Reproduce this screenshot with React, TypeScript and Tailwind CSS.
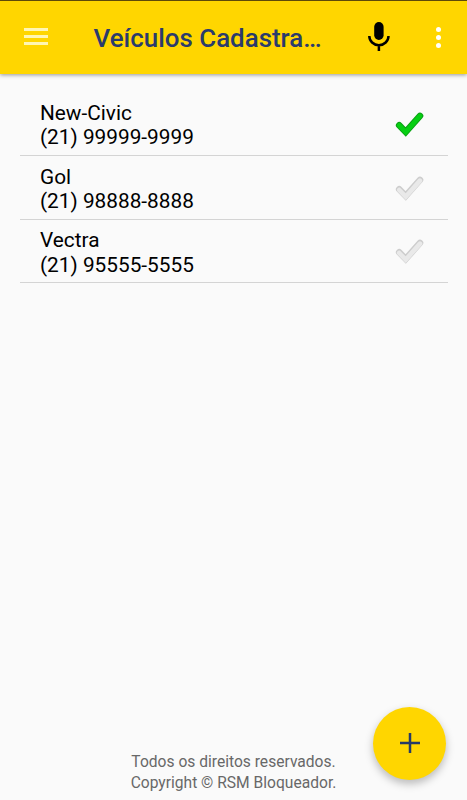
interface Vehicle {
  name: string;
  phone: string;
  selected: boolean;
}

const vehicles: Vehicle[] = [
  { name: 'New-Civic', phone: '(21) 99999-9999', selected: true },
  { name: 'Gol', phone: '(21) 98888-8888', selected: false },
  { name: 'Vectra', phone: '(21) 95555-5555', selected: false },
];

function CheckMark({ selected }: { selected: boolean }) {
  const edge = selected ? '#0a9f14' : '#cdcdcd';
  const fill = selected ? '#06cf12' : '#e9e9e9';
  const path = 'M4.2 13.3 10.7 20 25 3.9';

  return (
    <svg className="mt-[5px]" width="30" height="28" viewBox="0 0 30 28" fill="none" strokeLinecap="round">
      <path d={path} stroke={edge} strokeWidth="6.6" />
      <path d={path} stroke={fill} strokeWidth="4.6" transform={selected ? undefined : 'translate(0 0.7)'} />
    </svg>
  );
}

function Header() {
  return (
    <header className="flex h-[74px] shrink-0 items-center border-t border-[#5e4a08] bg-[#ffd600] shadow-[0_1px_4px_rgba(0,0,0,0.4)]">
      <button aria-label="Menu" className="mb-0.5 ml-6 flex w-6 flex-col gap-1">
        <span className="h-[3px] bg-[#fff6b4]" />
        <span className="h-[3px] bg-[#fff6b4]" />
        <span className="h-[3px] bg-[#fff6b4]" />
      </button>
      <h1 className="ml-[45.5px] w-[267.5px] text-[25.9px] leading-8 font-medium whitespace-nowrap text-[#2b3b6c]">
        Veículos Cadastra…
      </h1>
      <button aria-label="Falar" className="mb-1">
        <svg width="36" height="36" viewBox="0 0 36 36" fill="none">
          <rect x="13.2" y="4" width="9.4" height="18" rx="4.7" fill="#000" />
          <path d="M8.3 18a9.6 9.2 0 0 0 19.2 0M17.9 27v6" stroke="#000" strokeWidth="2.5" />
        </svg>
      </button>
      <button aria-label="Mais opções" className="ml-[39px] flex flex-col gap-[3px]">
        <span className="size-[5px] rounded-full bg-white" />
        <span className="size-[5px] rounded-full bg-white" />
        <span className="size-[5px] rounded-full bg-white" />
      </button>
    </header>
  );
}

export default function App() {
  return (
    <div className="relative flex h-[800px] w-[467px] flex-col bg-[#fafafa] font-['Roboto',sans-serif]">
      <Header />

      <ul className="mt-[18px] pr-[19px] pl-5">
        {vehicles.map((vehicle) => (
          <li
            key={vehicle.name}
            className="flex h-[63.8px] items-center justify-between border-b border-[#d4d4d4] pr-[23px] pl-5"
          >
            <div className="pt-1 text-[20.8px] leading-[24.5px] text-black">
              <p>{vehicle.name}</p>
              <p>{vehicle.phone}</p>
            </div>
            <CheckMark selected={vehicle.selected} />
          </li>
        ))}
      </ul>

      <footer className="mt-auto pb-1.5 text-center text-[15.6px] leading-[21px] text-[#686868]">
        <p>Todos os direitos reservados.</p>
        <p>Copyright © RSM Bloqueador.</p>
      </footer>

      <button
        aria-label="Adicionar veículo"
        className="absolute right-[21px] bottom-[20.5px] flex size-[73px] items-center justify-center rounded-full bg-[#ffd600] shadow-[0_4px_8px_rgba(0,0,0,0.26)]"
      >
        <svg width="20" height="20" viewBox="0 0 20 20" stroke="#263a66" strokeWidth="2.5">
          <path d="M10 0v20M0 10h20" />
        </svg>
      </button>
    </div>
  );
}
